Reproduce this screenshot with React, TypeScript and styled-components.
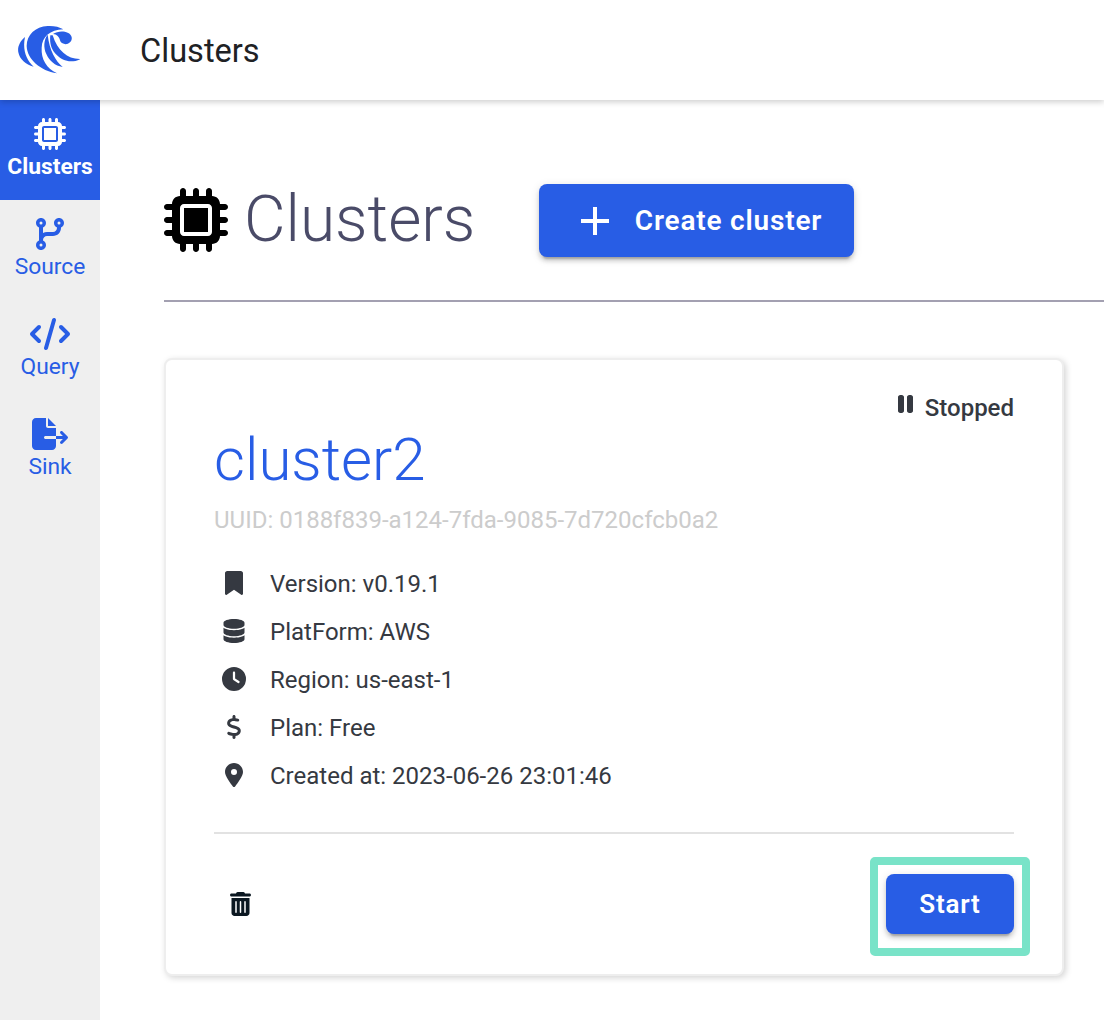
import React from 'react';
import styled, { createGlobalStyle, css } from 'styled-components';
import {
  FaBookmark,
  FaClock,
  FaCode,
  FaCodeBranch,
  FaDatabase,
  FaDollarSign,
  FaFileExport,
  FaLocationDot,
  FaMicrochip,
  FaPause,
  FaTrashCan,
} from 'react-icons/fa6';
import { MdAdd } from 'react-icons/md';

const BLUE = '#285de5';
const INK = '#353941';

const GlobalStyle = createGlobalStyle`
  *, *::before, *::after { box-sizing: border-box; }
  body {
    margin: 0;
    background: #fff;
    font-family: Roboto, sans-serif;
    -webkit-font-smoothing: antialiased;
  }
  h1, h2, p, ul { margin: 0; padding: 0; font-weight: inherit; }
  svg { display: block; flex: none; }
`;

const Page = styled.div`
  display: flex;
  flex-direction: column;
  width: 100%;
  height: 1020px;
  overflow: hidden;
`;

/* $ratio is the width of the glyph's view box divided by its height. */
const Glyph = styled.span<{ $size: number; $ratio?: number }>`
  flex: none;
  display: block;

  svg {
    height: ${(p) => p.$size}px;
    width: ${(p) => p.$size * (p.$ratio ?? 1)}px;
  }
`;

const Header = styled.header`
  position: relative;
  z-index: 1;
  flex: none;
  height: 100px;
  padding-left: 18px;
  display: flex;
  align-items: center;
  background: #fff;
  box-shadow: 0 2px 6px rgba(0, 0, 0, 0.2);
`;

const HeaderTitle = styled.div`
  margin-left: 60px;
  padding-top: 1px;
  font-size: 32.6px;
  line-height: 48px;
  color: #202124;
`;

const Body = styled.div`
  flex: 1;
  display: flex;
  min-height: 0;
`;

const Sidebar = styled.nav`
  flex: none;
  width: 100px;
  background: #efefef;
`;

const NavItem = styled.a<{ $active?: boolean }>`
  height: 100px;
  padding-top: 18px;
  display: flex;
  flex-direction: column;
  align-items: center;
  font-size: 22.8px;
  line-height: 34px;
  white-space: nowrap;
  color: ${BLUE};
  ${(p) =>
    p.$active &&
    css`
      background: ${BLUE};
      color: #fff;
      font-weight: 700;
    `}
`;

const Main = styled.main`
  flex: 1;
  min-width: 0;
  padding: 84px 0 0 64px;
`;

const TitleBar = styled.div`
  height: 118px;
  display: flex;
  align-items: flex-start;
  border-bottom: 2px solid #a3a0b1;
`;

const PageTitle = styled.h1`
  width: 375px;
  height: 72px;
  display: flex;
  align-items: center;
  gap: 16px;
  color: #000;
`;

const PageTitleText = styled.span`
  font-size: 64px;
  line-height: 72px;
  font-weight: 300;
  color: #4a4b68;
`;

const Button = styled.button`
  border: 0;
  border-radius: 8px;
  background: ${BLUE};
  color: #fff;
  font: 600 28px/48px Roboto, sans-serif;
  letter-spacing: 0.8px;
  display: flex;
  align-items: center;
  justify-content: center;
  padding: 0;
  white-space: nowrap;
  box-shadow:
    0 6px 2px -4px rgba(0, 0, 0, 0.2),
    0 4px 4px rgba(0, 0, 0, 0.14),
    0 2px 10px rgba(0, 0, 0, 0.12);
`;

const CreateButton = styled(Button)`
  width: 315px;
  height: 73px;
  gap: 16px;
`;

const StartButton = styled(Button)`
  width: 128px;
  height: 60px;
  font-size: 26px;
`;

const Card = styled.section`
  width: 900px;
  height: 618px;
  margin-top: 56px;
  padding: 0 48px;
  border: 2px solid #eeeeee;
  border-radius: 8px;
  background: #fff;
  box-shadow: 2px 2px 6px rgba(0, 0, 0, 0.17);
  color: ${INK};
`;

const Status = styled.div`
  height: 64px;
  padding-top: 32px;
  display: flex;
  justify-content: flex-end;
  gap: 12px;
  font-size: 24px;
  line-height: 32px;
  font-weight: 500;
`;

const ClusterName = styled.h2`
  height: 72px;
  font-size: 60px;
  line-height: 72px;
  font-weight: 300;
  color: ${BLUE};
`;

const Uuid = styled.p`
  height: 48px;
  font-size: 24px;
  line-height: 48px;
  color: #cccccc;
`;

const Details = styled.ul`
  list-style: none;
  padding-top: 15px;
`;

const DetailRow = styled.li`
  height: 48px;
  display: flex;
  align-items: center;
  font-size: 24px;
  line-height: 32px;
`;

const DetailIcon = styled.span`
  width: 40px;
  margin-right: 16px;
  display: flex;
  justify-content: center;
`;

const DetailText = styled.span`
  padding-top: 2px;
`;

const CardFooter = styled.footer`
  margin-top: 33px;
  padding: 23px 0 0 16px;
  display: flex;
  align-items: center;
  justify-content: space-between;
  border-top: 2px solid #e2e2e2;
  color: #0b1721;
`;

const Highlight = styled.div`
  margin-right: -16px;
  padding: 9px 8px 14px;
  border: 8px solid #79e3c8;
  border-radius: 5px;
`;

const TrashSlot = styled.span`
  padding-bottom: 5px;
`;

const Logo = () => (
  <svg width="62" height="50" viewBox="54 75 186 150" fill={BLUE}>
    <path d="M190 88C178 80 160 77 143 78C106 80 80 105 80 138C81 177 122 213 171 220C140 205 123 178 125 143C126 111 150 89 190 88Z" />
    <path d="M75 111C59 124 52 142 55 157C59 178 77 194 101 200C78 179 67 148 75 111Z" />
    <path d="M159 102C171 93 191 92 203 98C217 104 219 118 210 127C201 136 186 133 181 124C177 109 171 103 159 102Z" />
    <path d="M143 104C131 119 130 143 139 162C148 183 165 197 188 201C167 183 148 150 143 104Z" />
    <path d="M151 106C148 131 155 150 168 163C187 183 214 191 241 177C203 178 173 153 158 106Z" />
  </svg>
);

const navItems = [
  { label: 'Clusters', icon: FaMicrochip, ratio: 1, active: true },
  { label: 'Source', icon: FaCodeBranch, ratio: 448 / 512 },
  { label: 'Query', icon: FaCode, ratio: 640 / 512 },
  { label: 'Sink', icon: FaFileExport, ratio: 576 / 512 },
];

const details = [
  { text: 'Version: v0.19.1', icon: FaBookmark },
  { text: 'PlatForm: AWS', icon: FaDatabase },
  { text: 'Region: us-east-1', icon: FaClock },
  { text: 'Plan: Free', icon: FaDollarSign },
  { text: 'Created at: 2023-06-26 23:01:46', icon: FaLocationDot },
];

export default function App() {
  return (
    <>
      <GlobalStyle />
      <Page>
        <Header>
          <Logo />
          <HeaderTitle>Clusters</HeaderTitle>
        </Header>
        <Body>
          <Sidebar>
            {navItems.map(({ label, icon: Icon, ratio, active }) => (
              <NavItem key={label} $active={active}>
                <Glyph $size={32} $ratio={ratio}>
                  <Icon />
                </Glyph>
                {label}
              </NavItem>
            ))}
          </Sidebar>
          <Main>
            <TitleBar>
              <PageTitle>
                <Glyph $size={64}>
                  <FaMicrochip />
                </Glyph>
                <PageTitleText>Clusters</PageTitleText>
              </PageTitle>
              <CreateButton>
                <MdAdd size={48} />
                Create cluster
              </CreateButton>
            </TitleBar>
            <Card>
              <Status>
                <Glyph $size={24} $ratio={320 / 512}>
                  <FaPause />
                </Glyph>
                Stopped
              </Status>
              <ClusterName>cluster2</ClusterName>
              <Uuid>UUID: 0188f839-a124-7fda-9085-7d720cfcb0a2</Uuid>
              <Details>
                {details.map(({ text, icon: Icon }) => (
                  <DetailRow key={text}>
                    <DetailIcon>
                      <Glyph $size={24}>
                        <Icon />
                      </Glyph>
                    </DetailIcon>
                    <DetailText>{text}</DetailText>
                  </DetailRow>
                ))}
              </Details>
              <CardFooter>
                <TrashSlot>
                  <Glyph $size={24} $ratio={448 / 512}>
                    <FaTrashCan />
                  </Glyph>
                </TrashSlot>
                <Highlight>
                  <StartButton>Start</StartButton>
                </Highlight>
              </CardFooter>
            </Card>
          </Main>
        </Body>
      </Page>
    </>
  );
}
